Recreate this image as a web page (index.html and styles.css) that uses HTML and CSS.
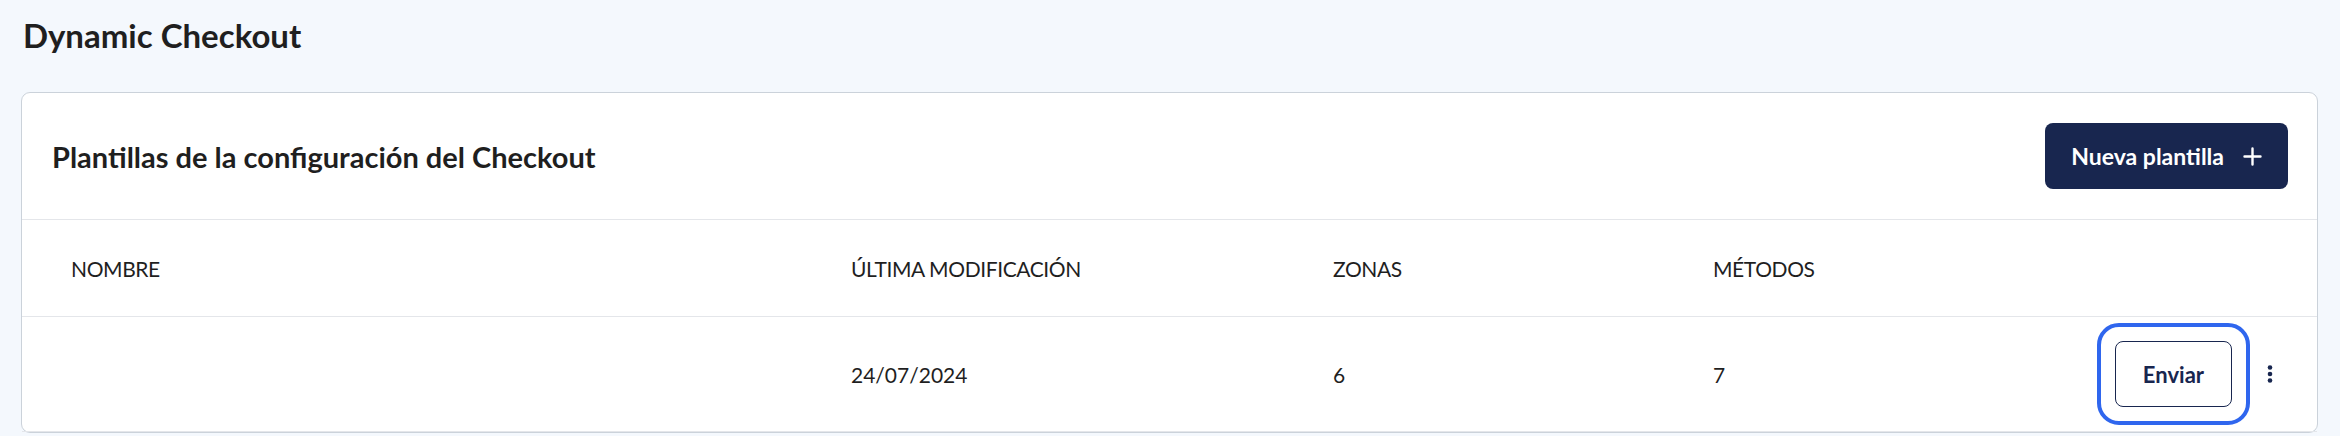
FILE: index.html
```html
<!DOCTYPE html>
<html lang="es">
<head>
    <meta charset="UTF-8">
    <meta name="viewport" content="width=device-width, initial-scale=1.0">
    <title>Dynamic Checkout</title>
    <link rel="stylesheet" href="styles.css">
</head>
<body>

    <h1 class="page-title">Dynamic Checkout</h1>

    <!-- Templates card -->
    <div class="card">
        <div class="card-header">
            <h2>Plantillas de la configuración del Checkout</h2>
            <button class="btn-primary">
                Nueva plantilla
                <svg class="icon-plus" width="19" height="19" viewBox="0 0 19 19" fill="none" stroke="currentColor" stroke-width="2.4" stroke-linecap="round">
                    <path d="M9.5 1.5v16M1.5 9.5h16"/>
                </svg>
            </button>
        </div>

        <table class="templates">
            <colgroup>
                <col class="col-name">
                <col class="col-date">
                <col class="col-zones">
                <col>
                <col class="col-actions">
            </colgroup>
            <thead>
                <tr>
                    <th>NOMBRE</th>
                    <th>ÚLTIMA MODIFICACIÓN</th>
                    <th>ZONAS</th>
                    <th>MÉTODOS</th>
                    <th></th>
                </tr>
            </thead>
            <tbody>
                <tr>
                    <td></td>
                    <td>24/07/2024</td>
                    <td>6</td>
                    <td>7</td>
                    <td>
                        <div class="actions">
                            <span class="focus-ring">
                                <button class="btn-outline">Enviar</button>
                            </span>
                            <button class="btn-more" aria-label="Más opciones">
                                <svg width="24" height="24" viewBox="0 0 24 24" fill="currentColor">
                                    <circle cx="12" cy="5.5" r="2.3"/>
                                    <circle cx="12" cy="12" r="2.3"/>
                                    <circle cx="12" cy="18.5" r="2.3"/>
                                </svg>
                            </button>
                        </div>
                    </td>
                </tr>
            </tbody>
        </table>
    </div>

</body>
</html>
```

FILE: styles.css
```css
body {
    font-family: 'Lato', 'Noto Sans', sans-serif;
    background-color: #f4f8fd;
    color: #1f1f1f;
    margin: 0;
    padding: 16px 22px 0 21px;
}

.page-title {
    margin: 0 0 38px 2px;
    font-size: 33px;
    line-height: 38px;
    font-weight: 700;
    color: #1f1f1f;
}

.card {
    background: #ffffff;
    border: 1px solid #cbd2da;
    border-radius: 9px;
}

.card-header {
    display: flex;
    align-items: center;
    justify-content: space-between;
    height: 126px;
    padding: 0 29px 0 30px;
    border-bottom: 1px solid #e4e6ea;
}

.card-header h2 {
    margin: 0;
    font-size: 29px;
    font-weight: 700;
    color: #1f1f1f;
}

.btn-primary {
    display: flex;
    align-items: center;
    gap: 19px;
    height: 66px;
    padding: 0 26px;
    background-color: #18264f;
    border: none;
    border-radius: 8px;
    color: #ffffff;
    font-family: inherit;
    font-size: 23px;
    font-weight: 700;
    cursor: pointer;
}

.templates {
    width: 100%;
    border-collapse: collapse;
    table-layout: fixed;
}

.col-name { width: 829px; }
.col-date { width: 482px; }
.col-zones { width: 380px; }
.col-actions { width: 226px; }

.templates th,
.templates td {
    padding: 0;
    text-align: left;
    font-size: 21px;
    font-weight: 400;
    color: #1f1f1f;
    border-bottom: 1px solid #e4e6ea;
}

.templates th {
    height: 96px;
    letter-spacing: -0.4px;
}

.templates td {
    height: 114px;
}

.templates th:first-child,
.templates td:first-child {
    padding-left: 49px;
}

.actions {
    display: flex;
    align-items: center;
    justify-content: flex-end;
    gap: 8px;
    padding-right: 35px;
}

.focus-ring {
    display: flex;
    padding: 14px;
    border: 4px solid #2f66ee;
    border-radius: 22px;
}

.btn-outline {
    height: 66px;
    padding: 0 27px;
    background: #ffffff;
    border: 1px solid #18264f;
    border-radius: 8px;
    color: #18264f;
    font-family: inherit;
    font-size: 22px;
    font-weight: 700;
    cursor: pointer;
}

.btn-more {
    display: flex;
    padding: 0;
    background: none;
    border: none;
    color: #18264f;
    cursor: pointer;
}
```
